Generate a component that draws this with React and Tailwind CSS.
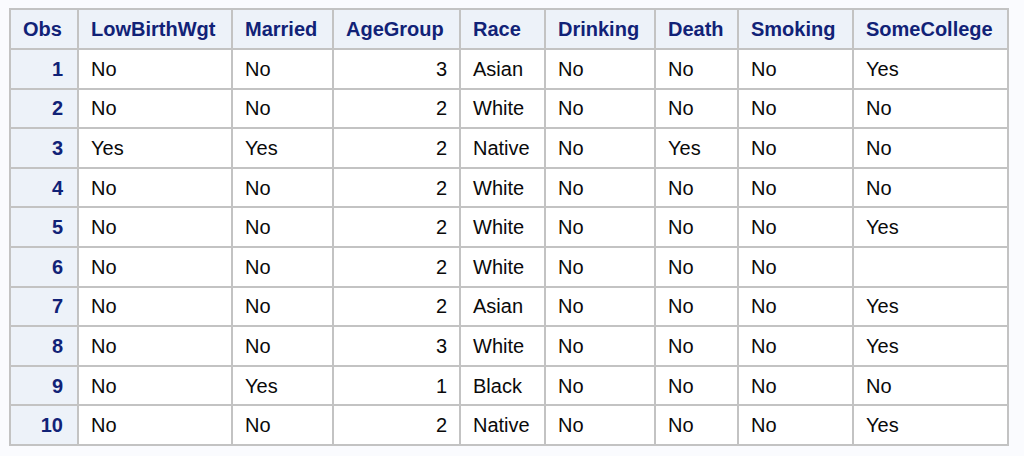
import React from 'react'

const cols = [
    { key: 'Obs', w: 'w-[68px]' },
    { key: 'LowBirthWgt', w: 'w-[154px]' },
    { key: 'Married', w: 'w-[101px]' },
    { key: 'AgeGroup', w: 'w-[127px]' },
    { key: 'Race', w: 'w-[85px]' },
    { key: 'Drinking', w: 'w-[110px]' },
    { key: 'Death', w: 'w-[83px]' },
    { key: 'Smoking', w: 'w-[115px]' },
    { key: 'SomeCollege', w: 'w-[155px]' },
]

const rows = [
    [1, 'No', 'No', 3, 'Asian', 'No', 'No', 'No', 'Yes'],
    [2, 'No', 'No', 2, 'White', 'No', 'No', 'No', 'No'],
    [3, 'Yes', 'Yes', 2, 'Native', 'No', 'Yes', 'No', 'No'],
    [4, 'No', 'No', 2, 'White', 'No', 'No', 'No', 'No'],
    [5, 'No', 'No', 2, 'White', 'No', 'No', 'No', 'Yes'],
    [6, 'No', 'No', 2, 'White', 'No', 'No', 'No', ''],
    [7, 'No', 'No', 2, 'Asian', 'No', 'No', 'No', 'Yes'],
    [8, 'No', 'No', 3, 'White', 'No', 'No', 'No', 'Yes'],
    [9, 'No', 'Yes', 1, 'Black', 'No', 'No', 'No', 'No'],
    [10, 'No', 'No', 2, 'Native', 'No', 'No', 'No', 'Yes'],
]

export default function App() {
    return (
        <div className="w-[1024px] h-[456px] bg-[#fafbfe] pt-[8px] pl-[9px]" style={{ fontFamily: '"Liberation Sans", Arial, sans-serif' }}>
            <table className="w-[999px] table-fixed border-separate border-spacing-0 border-l-2 border-t-2 border-[#c3c3c3] text-[20px]">
                <thead>
                    <tr className="h-[40px]">
                        {cols.map(c => (
                            <th key={c.key} className={`${c.w} px-3 text-left font-bold text-[#112277] bg-[#edf2f9] border-r-2 border-b-2 border-[#c3c3c3]`}>
                                {c.key}
                            </th>
                        ))}
                    </tr>
                </thead>
                <tbody>
                    {rows.map(r => (
                        <tr key={r[0]} className="h-[39.6px]">
                            {r.map((v, i) => (
                                <td
                                    key={i}
                                    className={
                                        i === 0
                                            ? 'px-3 pr-[14px] text-right font-bold text-[#112277] bg-[#edf2f9] border-r-2 border-b-2 border-[#c3c3c3]'
                                            : i === 3
                                                ? 'px-3 text-right text-[#0a0a0a] bg-white border-r-2 border-b-2 border-[#c3c3c3]'
                                                : 'px-3 text-left text-[#0a0a0a] bg-white border-r-2 border-b-2 border-[#c3c3c3]'
                                    }
                                >
                                    {v}
                                </td>
                            ))}
                        </tr>
                    ))}
                </tbody>
            </table>
        </div>
    )
}
